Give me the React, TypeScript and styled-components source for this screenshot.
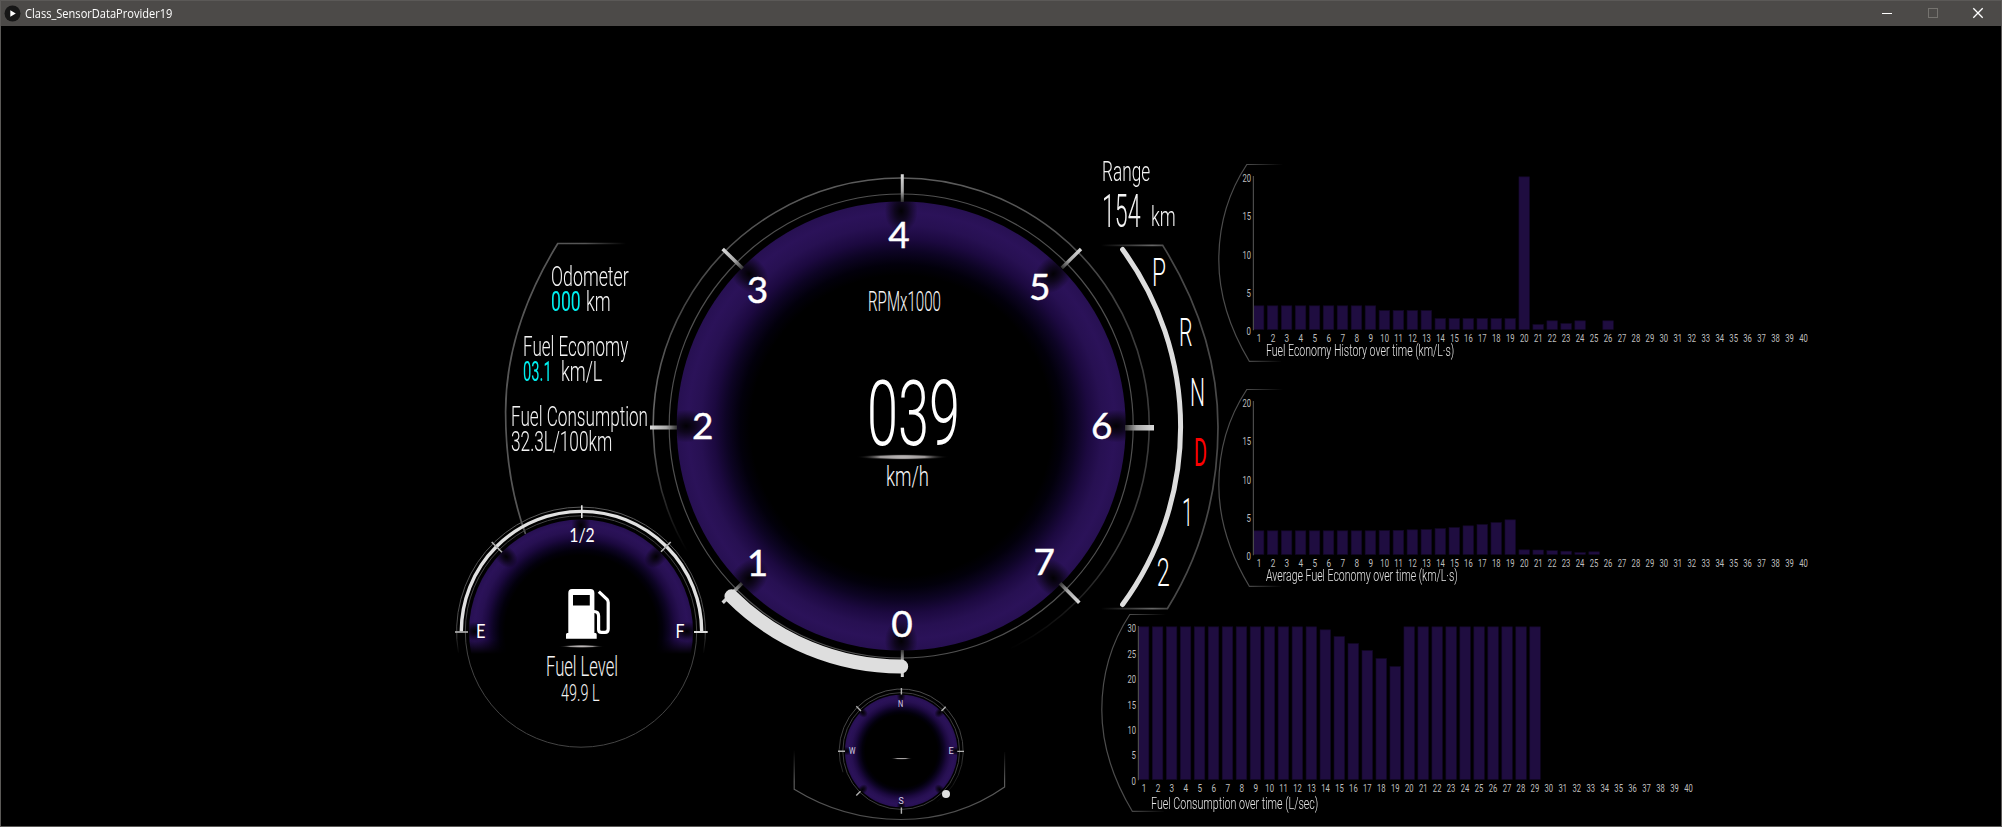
import React, { useLayoutEffect, useRef, useState } from "react";
import styled, { createGlobalStyle } from "styled-components";

const GlobalStyle = createGlobalStyle`
  html, body { margin: 0; padding: 0; background: #000; }
  body { overflow: hidden; }
  svg { display: block; overflow: visible; }
`;

const NARROW = `Roboto, "Liberation Sans", sans-serif`;
const ROUND = `Lato, "Liberation Sans", sans-serif`;

/* ---------- text ---------- */

const TextBox = styled.span<{ $w: number; $size: number; $line: number; $color: string; $weight: number; $font: string }>`
  display: block;
  flex: none;
  width: ${(p) => p.$w}px;
  height: ${(p) => p.$line}px;
  line-height: ${(p) => p.$line}px;
  font-family: ${(p) => p.$font};
  font-size: ${(p) => p.$size}px;
  font-weight: ${(p) => p.$weight};
  color: ${(p) => p.$color};
  white-space: pre;
`;

const TextInk = styled.span`
  display: inline-block;
  transform-origin: 0 0;
`;

interface CondensedProps {
  width: number;
  size: number;
  line: number;
  color?: string;
  weight?: number;
  font?: string;
  children: string;
}

/* Squeezes a line of text to the given width. */
function Condensed({ width, size, line, color = "#f4f4f4", weight = 300, font = NARROW, children }: CondensedProps) {
  const ref = useRef<HTMLSpanElement>(null);
  const [scale, setScale] = useState(1);
  useLayoutEffect(() => {
    if (ref.current) setScale(width / ref.current.offsetWidth);
  }, [width, children]);
  return (
    <TextBox $w={width} $size={size} $line={line} $color={color} $weight={weight} $font={font}>
      <TextInk ref={ref} style={{ transform: `scaleX(${scale})` }}>
        {children}
      </TextInk>
    </TextBox>
  );
}

const ThinLabel = styled.text<{ $size: number; $color?: string; $weight?: number }>`
  font-family: ${NARROW};
  font-size: ${(p) => p.$size}px;
  font-weight: ${(p) => p.$weight ?? 300};
  fill: ${(p) => p.$color ?? "#f4f4f4"};
`;

const DialNumber = styled.text<{ $size: number; $stroke?: number }>`
  font-family: ${ROUND};
  font-size: ${(p) => p.$size}px;
  font-weight: 400;
  fill: #fff;
  stroke: #fff;
  stroke-width: ${(p) => p.$stroke ?? 0}px;
  text-anchor: middle;
`;

/* ---------- window ---------- */

const Window = styled.div`
  box-sizing: border-box;
  width: 2002px;
  height: 827px;
  display: flex;
  flex-direction: column;
  border: 1px solid #5b5957;
  background: #000;
  overflow: hidden;
`;

const TitleBar = styled.header`
  flex: none;
  box-sizing: border-box;
  height: 25px;
  display: flex;
  align-items: center;
  background: #4c4a48;
  padding: 0 0 1px 2.5px;
`;

const TitleText = styled.div`
  margin-left: 4.5px;
  flex: 1;
`;

const WindowButton = styled.span`
  width: 45.5px;
  display: flex;
  justify-content: center;
`;

const Dashboard = styled.main`
  flex: 1;
  min-height: 0;
  display: flex;
  align-items: flex-start;
  padding-left: 454px;
`;

const Column = styled.section<{ $w: number; $top: number }>`
  flex: none;
  width: ${(p) => p.$w}px;
  padding-top: ${(p) => p.$top}px;
  display: flex;
  flex-direction: column;
  align-items: flex-start;
`;

const Layers = styled.div`
  display: grid;
  > * {
    grid-area: 1 / 1;
  }
`;

/* ---------- left cluster ---------- */

const Readouts = styled.div`
  display: flex;
  flex-direction: column;
  gap: 20px;
  padding-top: 24px;
`;

const Readout = styled.div<{ $indent: number }>`
  padding-left: ${(p) => p.$indent}px;
`;

const ValueLine = styled.div<{ $gap: number }>`
  display: flex;
  gap: ${(p) => p.$gap}px;
`;

const FuelSlot = styled.div`
  margin-top: -2px;
`;

/* ---------- dial parts ---------- */

type Point = [number, number];

const polar = (cx: number, cy: number, r: number, deg: number): Point => {
  const a = (deg * Math.PI) / 180;
  return [cx + r * Math.sin(a), cy - r * Math.cos(a)];
};

/* Angles run clockwise from twelve o'clock. */
const arc = (cx: number, cy: number, r: number, from: number, to: number) => {
  const [x1, y1] = polar(cx, cy, r, from);
  const [x2, y2] = polar(cx, cy, r, to);
  return `M${x1} ${y1}A${r} ${r} 0 ${Math.abs(to - from) > 180 ? 1 : 0} 1 ${x2} ${y2}`;
};

function GlowDefs({ id, cx, cy, r, inner }: { id: string; cx: number; cy: number; r: number; inner: number }) {
  const at = (t: number) => inner + (1 - inner) * t;
  return (
    <>
      <radialGradient id={`${id}-glow`} gradientUnits="userSpaceOnUse" cx={cx} cy={cy} r={r}>
        <stop offset={at(0)} stopColor="#000" />
        <stop offset={at(0.15)} stopColor="#02000b" />
        <stop offset={at(0.33)} stopColor="#0d0424" />
        <stop offset={at(0.5)} stopColor="#1c0940" />
        <stop offset={at(0.68)} stopColor="#271052" />
        <stop offset={at(0.85)} stopColor="#2b1259" />
        <stop offset={1} stopColor="#271052" />
      </radialGradient>
      <radialGradient id={`${id}-notch`}>
        <stop offset={0} stopColor="#000" stopOpacity={0.95} />
        <stop offset={0.4} stopColor="#000" stopOpacity={0.65} />
        <stop offset={1} stopColor="#000" stopOpacity={0} />
      </radialGradient>
    </>
  );
}

function Notches({ id, cx, cy, r, size, angles }: { id: string; cx: number; cy: number; r: number; size: number; angles: number[] }) {
  return (
    <>
      {angles.map((a) => (
        <ellipse
          key={a}
          cx={cx}
          cy={cy - r}
          rx={size * 0.75}
          ry={size}
          transform={`rotate(${a} ${cx} ${cy})`}
          fill={`url(#${id}-notch)`}
        />
      ))}
    </>
  );
}

function Underline({ id, x, y, w, h }: { id: string; x: number; y: number; w: number; h: number }) {
  return (
    <>
      <radialGradient id={id}>
        <stop offset={0} stopColor="#c4c0c0" />
        <stop offset={0.5} stopColor="#9a9696" />
        <stop offset={1} stopColor="#000" stopOpacity={0} />
      </radialGradient>
      <rect x={x} y={y - h / 2} width={w} height={h} fill={`url(#${id})`} />
    </>
  );
}

/* ---------- fuel gauge ---------- */

function FuelGauge() {
  const cx = 581;
  const cy = 631.5;
  return (
    <svg width={255} height={246} viewBox="455 504 255 246">
      <defs>
        <GlowDefs id="fuel" cx={cx} cy={cy} r={112} inner={0.68} />
        <linearGradient id="fuel-cut" x1={0} y1={0} x2={0} y2={1}>
          <stop offset={0.9} stopColor="#fff" />
          <stop offset={1} stopColor="#000" />
        </linearGradient>
        <mask id="fuel-mask" maskUnits="userSpaceOnUse" x={455} y={504} width={255} height={150}>
          <rect x={455} y={504} width={255} height={150} fill="url(#fuel-cut)" />
        </mask>
        <linearGradient id="fuel-ring" gradientUnits="userSpaceOnUse" x1={0} y1={506} x2={0} y2={654}>
          <stop offset={0} stopColor="#5a5a5a" />
          <stop offset={0.85} stopColor="#4a4a4a" />
          <stop offset={1} stopColor="#000" />
        </linearGradient>
      </defs>
      <g mask="url(#fuel-mask)">
        <circle cx={cx} cy={cy} r={112} fill="url(#fuel-glow)" />
        <Notches id="fuel" cx={cx} cy={cy} r={106} size={13} angles={[-90, -45, 0, 45, 90]} />
      </g>
      <circle cx={cx} cy={cy} r={115.7} fill="none" stroke="#444" strokeWidth={1} />
      <path d={arc(cx, cy, 124.4, -100, 100)} fill="none" stroke="url(#fuel-ring)" strokeWidth={1} />
      <path d={arc(cx + 0.5, cy, 120.2, -90, 90)} fill="none" stroke="#e0e0e0" strokeWidth={3.4} />
      <g stroke="#b4b4b4" strokeWidth={1.6}>
        <path d="M581.8 505.3V518" stroke="#e6e6e6" />
        <path d="M491.7 542L502 552.3M670.7 542L661 551.7" />
        <path d="M455 632H468" />
        <path d="M694 632H707.7" strokeWidth={2} stroke="#dcdcdc" />
      </g>
      <DialNumber x={582} y={542.3} $size={19} textLength={25.5} lengthAdjust="spacingAndGlyphs">1/2</DialNumber>
      <DialNumber x={480.7} y={637.6} $size={19} textLength={9.5} lengthAdjust="spacingAndGlyphs">E</DialNumber>
      <DialNumber x={680} y={637.6} $size={19} textLength={9} lengthAdjust="spacingAndGlyphs">F</DialNumber>
      <path
        fill="#fff"
        fillRule="evenodd"
        d="M572 589H590.5Q594.4 589 594.4 593V633H595.5Q596.7 633 596.7 634.5V638.8H566V634.5Q566 633 567.3 633H568.3V593Q568.3 589 572 589ZM573 595V605.6H589.8V595Z"
      />
      <path d="M594 611.5Q598.6 611.5 598.6 616V629.5Q598.6 632.4 601.5 632.4H605Q608.2 632.4 608.2 629V602.5Q608.2 600.8 607 599.3L598.8 591.6" fill="none" stroke="#fff" strokeWidth={3.2} />
      <Underline id="fuel-line" x={559} y={646.4} w={45} h={3.2} />
      <ThinLabel x={546} y={675.7} $size={28} textLength={72} lengthAdjust="spacingAndGlyphs">Fuel Level</ThinLabel>
      <ThinLabel x={561} y={700.7} $size={23} textLength={38.5} lengthAdjust="spacingAndGlyphs">49.9 L</ThinLabel>
    </svg>
  );
}

/* ---------- tachometer ---------- */

const TACH_NUMBERS: { n: string; x: number; y: number }[] = [
  { n: "0", x: 902, y: 637 },
  { n: "1", x: 757.5, y: 575.8 },
  { n: "2", x: 702.8, y: 438.7 },
  { n: "3", x: 757.5, y: 303 },
  { n: "4", x: 899, y: 247.5 },
  { n: "5", x: 1039.7, y: 299.8 },
  { n: "6", x: 1101.7, y: 438.5 },
  { n: "7", x: 1044.2, y: 574.6 },
];

const TACH_TICKS: { from: Point; to: Point; w: number }[] = [
  { from: [902.3, 174.3], to: [902.31, 202], w: 3 },
  { from: [722.7, 249], to: [742.7, 268.5], w: 3.6 },
  { from: [1081, 249], to: [1061.7, 268], w: 3.4 },
  { from: [650, 427.5], to: [677, 427.51], w: 4 },
  { from: [1154, 427.7], to: [1125, 427.71], w: 5.4 },
  { from: [1079.3, 602.7], to: [1060, 583.3], w: 3.6 },
  { from: [722.7, 602.7], to: [742, 583.3], w: 3.4 },
  { from: [902.3, 677], to: [902.31, 650], w: 3 },
];

function Tachometer() {
  const cx = 901.2;
  const cy = 426;
  return (
    <svg width={510} height={510} viewBox="650 171 510 510">
      <defs>
        <GlowDefs id="tach" cx={cx} cy={cy} r={224.5} inner={0.67} />
        <linearGradient id="ring-left" gradientUnits="userSpaceOnUse" x1={0} y1={177} x2={0} y2={552}>
          <stop offset={0} stopColor="#5c5c5c" />
          <stop offset={0.35} stopColor="#444" />
          <stop offset={0.65} stopColor="#6a6a6a" />
          <stop offset={1} stopColor="#000" />
        </linearGradient>
        <linearGradient id="ring-right" gradientUnits="userSpaceOnUse" x1={0} y1={177} x2={0} y2={650}>
          <stop offset={0} stopColor="#5c5c5c" />
          <stop offset={0.3} stopColor="#3c3c3c" />
          <stop offset={0.8} stopColor="#3a3a3a" />
          <stop offset={1} stopColor="#000" />
        </linearGradient>
        {TACH_TICKS.map((t, i) => (
          <linearGradient key={i} id={`tick-${i}`} gradientUnits="userSpaceOnUse" x1={t.from[0]} y1={t.from[1]} x2={t.to[0]} y2={t.to[1]}>
            <stop offset={0} stopColor="#dadada" />
            <stop offset={0.6} stopColor="#a8a8a8" />
            <stop offset={1} stopColor="#333" />
          </linearGradient>
        ))}
      </defs>
      <circle cx={cx} cy={cy} r={224.5} fill="url(#tach-glow)" />
      <Notches id="tach" cx={cx} cy={cy} r={215} size={22} angles={[0, 45, 90, 135, 180, 225, 270, 315]} />
      <circle cx={cx} cy={cy} r={232} fill="none" stroke="#505050" strokeWidth={1.2} />
      <path d={arc(cx, cy, 248, -122, 0)} fill="none" stroke="url(#ring-left)" strokeWidth={1.6} />
      <path d={arc(cx, cy, 248, 0, 154)} fill="none" stroke="url(#ring-right)" strokeWidth={1.6} />
      {TACH_TICKS.map((t, i) => (
        <line key={i} x1={t.from[0]} y1={t.from[1]} x2={t.to[0]} y2={t.to[1]} stroke={`url(#tick-${i})`} strokeWidth={t.w} />
      ))}
      <path d={arc(cx, cy, 240.5, 180, 224.9)} fill="none" stroke="#dedede" strokeWidth={14} strokeLinecap="round" />
      {TACH_NUMBERS.map((t) => (
        <DialNumber key={t.n} x={t.x} y={t.y} $size={37} $stroke={0.4}>
          {t.n}
        </DialNumber>
      ))}
      <ThinLabel x={868} y={311} $size={28} textLength={73} lengthAdjust="spacingAndGlyphs">RPMx1000</ThinLabel>
      <ThinLabel x={867} y={445} $size={91} textLength={93} lengthAdjust="spacingAndGlyphs" $color="#fff">039</ThinLabel>
      <Underline id="speed-line" x={856} y={457} w={93} h={6} />
      <ThinLabel x={886} y={485.7} $size={28} textLength={43} lengthAdjust="spacingAndGlyphs">km/h</ThinLabel>
    </svg>
  );
}

/* ---------- compass ---------- */

const CompassSlot = styled.div`
  margin: 7px 0 0 140px;
`;

const COMPASS_POINTS = [
  { n: "N", x: 900.7, y: 706.5 },
  { n: "E", x: 951, y: 754 },
  { n: "S", x: 901, y: 804.3 },
  { n: "W", x: 852.2, y: 754 },
];

function Compass() {
  const cx = 901.2;
  const cy = 751;
  return (
    <svg width={220} height={134} viewBox="790 688 220 134">
      <defs>
        <GlowDefs id="compass" cx={cx} cy={cy} r={56.3} inner={0.64} />
        <linearGradient id="compass-ring" gradientUnits="userSpaceOnUse" x1={0} y1={690} x2={0} y2={808}>
          <stop offset={0} stopColor="#555" />
          <stop offset={0.5} stopColor="#444" />
          <stop offset={1} stopColor="#000" />
        </linearGradient>
        <linearGradient id="compass-frame" gradientUnits="userSpaceOnUse" x1={0} y1={750} x2={0} y2={820}>
          <stop offset={0} stopColor="#000" />
          <stop offset={0.45} stopColor="#5c5c5c" />
          <stop offset={1} stopColor="#4c4c4c" />
        </linearGradient>
      </defs>
      <circle cx={cx} cy={cy} r={56.3} fill="url(#compass-glow)" />
      <Notches id="compass" cx={cx} cy={cy} r={54.5} size={6} angles={[0, 45, 90, 135, 180, 225, 270, 315]} />
      <circle cx={cx} cy={cy} r={58.4} fill="none" stroke="#444" strokeWidth={0.9} />
      <path d={arc(cx, cy, 62, -110, 145)} fill="none" stroke="url(#compass-ring)" strokeWidth={0.9} />
      <path
        d="M901.4 688V694.5M838 751.3H845M957.3 751.4H964M901.4 807.5V813.7M856.3 706.3L861 711M945.7 706.7L941.5 711M856.3 795.5L860.5 791.3"
        stroke="#b0b0b0"
        strokeWidth={1.4}
      />
      {COMPASS_POINTS.map((p) => (
        <ThinLabel key={p.n} x={p.x} y={p.y} $size={9.5} $color="#d6d0e4" $weight={400} textAnchor="middle" textLength={p.n === "W" ? 6.5 : 5.2} lengthAdjust="spacingAndGlyphs">
          {p.n}
        </ThinLabel>
      ))}
      <Underline id="compass-line" x={890} y={758.8} w={23} h={1.8} />
      <circle cx={946} cy={794} r={4} fill="#e0e0e0" />
      <path d="M794.2 750V789.3Q843 819.5 901 819.5Q958 819.5 1004.6 787V752" fill="none" stroke="url(#compass-frame)" strokeWidth={1.2} />
    </svg>
  );
}

/* ---------- range and gear selector ---------- */

const RangeBlock = styled.div`
  padding-left: 0.5px;
`;

const RangeValue = styled.div`
  display: flex;
  align-items: flex-start;
  gap: 11px;
  margin-top: 3px;
`;

const UnitDrop = styled.div`
  padding-top: 17px;
`;

const GearSlot = styled.div`
  margin-top: 9px;
`;

const GEARS = [
  { g: "P", x: 1159, y: 286, w: 14 },
  { g: "R", x: 1185.8, y: 346, w: 13.5 },
  { g: "N", x: 1197.5, y: 406, w: 15 },
  { g: "D", x: 1200.5, y: 465.8, w: 13, on: true },
  { g: "1", x: 1187.5, y: 526, w: 11 },
  { g: "2", x: 1163.3, y: 586, w: 13 },
];

function GearSelector() {
  return (
    <svg width={117} height={368} viewBox="1101 243 117 368">
      <defs>
        <linearGradient id="gear-frame" gradientUnits="userSpaceOnUse" x1={1101} y1={0} x2={1165} y2={0}>
          <stop offset={0} stopColor="#000" />
          <stop offset={0.8} stopColor="#666" />
          <stop offset={1} stopColor="#484848" />
        </linearGradient>
      </defs>
      <path
        d="M1101 245.4H1162.7C1198 302 1218 362 1218 427C1218 492 1202 553 1167.3 608.7H1101"
        fill="none"
        stroke="url(#gear-frame)"
        strokeWidth={1.7}
      />
      <path d={arc(880, 427, 300.6, 53.8, 126.2)} fill="none" stroke="#dedede" strokeWidth={5} strokeLinecap="round" />
      {GEARS.map((g) => (
        <ThinLabel
          key={g.g}
          x={g.x}
          y={g.y}
          $size={38}
          $color={g.on ? "#ff0000" : "#fff"}
          $weight={g.on ? 400 : 300}
          textAnchor="middle"
          textLength={g.w}
          lengthAdjust="spacingAndGlyphs"
        >
          {g.g}
        </ThinLabel>
      ))}
    </svg>
  );
}

/* ---------- bar charts ---------- */

const ChartStack = styled.div`
  display: flex;
  flex-direction: column;
  gap: 23px;
`;

const ChartBox = styled.article<{ $shift: number }>`
  display: grid;
  grid-template-rows: 181px 21px;
  width: 600px;
  margin-left: ${(p) => p.$shift}px;
`;

const FrameCell = styled.div<{ $nudge: number }>`
  grid-area: 1 / 1 / 3 / 2;
  margin-left: ${(p) => p.$nudge}px;
`;

const PlotCell = styled.div`
  grid-area: 1 / 1;
`;

const CaptionCell = styled.div<{ $drop: number }>`
  grid-area: 2 / 1;
  padding: ${(p) => p.$drop}px 0 0 48.5px;
`;

const repeat = (n: number, v: number): number[] => Array(n).fill(v);

interface ChartData {
  id: string;
  caption: string;
  captionWidth: number;
  labels: string[];
  /* Heights in pixels above the axis. */
  bars: number[];
  shift?: number;
  frameNudge?: number;
  captionDrop?: number;
}

const CHARTS: ChartData[] = [
  {
    id: "history",
    caption: "Fuel Economy History over time (km/L·s)",
    captionWidth: 188,
    labels: ["20", "15", "10", "5", "0"],
    bars: [...repeat(9, 23.7), ...repeat(4, 19), ...repeat(6, 11), 152.7, 5, 8.7, 6, 8.7, 0, 8.7],
  },
  {
    id: "average",
    caption: "Average Fuel Economy over time (km/L·s)",
    captionWidth: 192,
    labels: ["20", "15", "10", "5", "0"],
    bars: [...repeat(9, 23.7), 24, 24.2, 24.7, 25, 26, 27, 28.7, 30, 32, 34.7, 4.7, 4.5, 3.8, 3.3, 2, 2.7],
  },
  {
    id: "consumption",
    caption: "Fuel Consumption over time (L/sec)",
    captionWidth: 167.5,
    labels: ["30", "25", "20", "15", "10", "5", "0"],
    bars: [...repeat(13, 152.7), 149.7, 143, 136, 129, 121, 113, ...repeat(10, 152.7)],
    shift: -115,
    frameNudge: -2,
    captionDrop: 2.5,
  },
];

const COUNTS = Array.from({ length: 40 }, (_, i) => i + 1);
const BASE = 167.2;

function Chart({ id, caption, captionWidth, labels, bars, shift = 0, frameNudge = 0, captionDrop = 0 }: ChartData) {
  const step = 152.7 / (labels.length - 1);
  return (
    <ChartBox $shift={shift}>
      <FrameCell $nudge={frameNudge}>
        <svg width={70} height={202} viewBox="0 0 70 202">
          <defs>
            <linearGradient id={`${id}-frame`} gradientUnits="userSpaceOnUse" x1={30} y1={0} x2={66} y2={0}>
              <stop offset={0} stopColor="#4c4c4c" />
              <stop offset={1} stopColor="#000" />
            </linearGradient>
          </defs>
          <path d="M66 2.5H29.8C11 31 1.8 64 1.8 98C1.8 135 13 167 32.3 199.3H64" fill="none" stroke={`url(#${id}-frame)`} strokeWidth={1.2} />
        </svg>
      </FrameCell>
      <PlotCell>
        <svg width={600} height={181} viewBox="0 0 600 181">
          {bars.map((h, i) =>
            h > 0 ? (
              <rect key={i} x={36.3 + i * 13.98} y={BASE - h + 0.3} width={10.6} height={h} fill="#1f0d40" stroke="#120726" strokeWidth={0.6} />
            ) : null,
          )}
          <path d="M36.4 14V168.3" stroke="#4a4a4a" strokeWidth={1.2} />
          {labels.map((l, i) => (
            <ThinLabel
              key={l}
              x={34}
              y={20.2 + i * step}
              $size={11}
              $color="#bebebe"
              $weight={400}
              textAnchor="end"
              textLength={l.length === 2 ? 8.6 : 4.4}
              lengthAdjust="spacingAndGlyphs"
            >
              {l}
            </ThinLabel>
          ))}
          {COUNTS.map((n) => (
            <ThinLabel
              key={n}
              x={42 + (n - 1) * 13.96}
              y={180}
              $size={11.5}
              $color="#bebebe"
              $weight={400}
              textAnchor="middle"
              textLength={n > 9 ? 8.6 : 4.6}
              lengthAdjust="spacingAndGlyphs"
            >
              {n}
            </ThinLabel>
          ))}
        </svg>
      </PlotCell>
      <CaptionCell $drop={captionDrop}>
        <Condensed width={captionWidth} size={16} line={16} color="#e6e6e6">
          {caption}
        </Condensed>
      </CaptionCell>
    </ChartBox>
  );
}

/* ---------- app ---------- */

export default function App() {
  return (
    <>
      <GlobalStyle />
      <Window>
        <TitleBar>
          <svg width={17} height={17} viewBox="0 0 17 17">
            <circle cx={8.5} cy={8.5} r={8} fill="#161616" />
            <path d="M6.3 5.2L11.8 8.5L6.3 11.8Z" fill="#fff" />
          </svg>
          <TitleText>
            <Condensed width={147.5} size={12} line={17} color="#fff" weight={400} font={`"Open Sans", sans-serif`}>
              Class_SensorDataProvider19
            </Condensed>
          </TitleText>
          <WindowButton>
            <svg width={10} height={10} viewBox="0 0 10 10">
              <path d="M0 5.5H10" stroke="#fff" />
            </svg>
          </WindowButton>
          <WindowButton>
            <svg width={10} height={10} viewBox="0 0 10 10">
              <rect x={0.5} y={0.5} width={9} height={9} fill="none" stroke="#75736f" />
            </svg>
          </WindowButton>
          <WindowButton>
            <svg width={10} height={10} viewBox="0 0 10 10">
              <path d="M0.3 0.3L9.7 9.7M9.7 0.3L0.3 9.7" stroke="#fff" strokeWidth={1.3} />
            </svg>
          </WindowButton>
        </TitleBar>
        <Dashboard>
          <Column $w={195} $top={214}>
            <Layers>
              <svg width={195} height={266} viewBox="455 240 195 266">
                <defs>
                  <linearGradient id="info-frame" gradientUnits="userSpaceOnUse" x1={558} y1={0} x2={626} y2={0}>
                    <stop offset={0} stopColor="#565656" />
                    <stop offset={0.4} stopColor="#565656" />
                    <stop offset={1} stopColor="#000" />
                  </linearGradient>
                </defs>
                <path d="M626 243.5H557.8C531 287 505.6 345 505.6 412C505.6 455 512.5 498 525.5 534" fill="none" stroke="url(#info-frame)" strokeWidth={1.7} />
              </svg>
              <Readouts>
                <Readout $indent={96}>
                  <Condensed width={77.5} size={28} line={25}>Odometer</Condensed>
                  <ValueLine $gap={5.5}>
                    <Condensed width={29.5} size={28} line={25} color="#00f0f0" weight={400}>000</Condensed>
                    <Condensed width={25} size={28} line={25}>km</Condensed>
                  </ValueLine>
                </Readout>
                <Readout $indent={67.5}>
                  <Condensed width={105} size={28} line={25}>Fuel Economy</Condensed>
                  <ValueLine $gap={9.5}>
                    <Condensed width={29} size={28} line={25} color="#00f0f0" weight={400}>03.1</Condensed>
                    <Condensed width={41} size={28} line={25}>km/L</Condensed>
                  </ValueLine>
                </Readout>
                <Readout $indent={56}>
                  <Condensed width={137} size={28} line={25}>Fuel Consumption</Condensed>
                  <Condensed width={101} size={28} line={25}>32.3L/100km</Condensed>
                </Readout>
              </Readouts>
            </Layers>
            <FuelSlot>
              <FuelGauge />
            </FuelSlot>
          </Column>
          <Column $w={451} $top={145}>
            <Tachometer />
            <CompassSlot>
              <Compass />
            </CompassSlot>
          </Column>
          <Column $w={116} $top={133}>
            <RangeBlock>
              <Condensed width={48} size={28} line={25}>Range</Condensed>
              <RangeValue>
                <Condensed width={38.5} size={47} line={47}>154</Condensed>
                <UnitDrop>
                  <Condensed width={25} size={28} line={25}>km</Condensed>
                </UnitDrop>
              </RangeValue>
            </RangeBlock>
            <GearSlot>
              <GearSelector />
            </GearSlot>
          </Column>
          <Column $w={600} $top={136}>
            <ChartStack>
              {CHARTS.map((c) => (
                <Chart key={c.id} {...c} />
              ))}
            </ChartStack>
          </Column>
        </Dashboard>
      </Window>
    </>
  );
}
